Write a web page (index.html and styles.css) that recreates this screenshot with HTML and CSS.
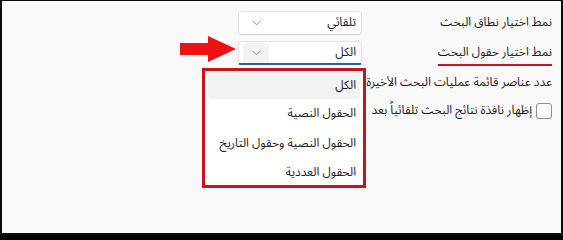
FILE: index.html
```html
<!DOCTYPE html>
<html lang="ar" dir="rtl">
<head>
<meta charset="utf-8">
<title>إعدادات البحث</title>
<link rel="stylesheet" href="styles.css">
</head>
<body>
<div class="frame">
  <div class="settings">
    <div class="row">
      <div class="label">نمط اختيار نطاق البحث</div>
      <div class="combo">
        <span class="combo-text">تلقائي</span>
        <span class="chev"><svg width="9" height="6" viewBox="0 0 9 6"><path d="M0.5 0.8 L4.5 4.8 L8.5 0.8" fill="none" stroke="#8a8a8a" stroke-width="1"/></svg></span>
      </div>
    </div>
    <div class="row">
      <div class="label"><span class="marked">نمط اختيار حقول البحث</span></div>
      <div class="combo combo-open">
        <span class="combo-text">الكل</span>
        <span class="chev chev-hover"><svg width="9" height="6" viewBox="0 0 9 6"><path d="M0.5 0.8 L4.5 4.8 L8.5 0.8" fill="none" stroke="#8a8a8a" stroke-width="1"/></svg></span>
      </div>
    </div>
    <div class="row row-text">
      <div class="label label-wide">عدد عناصر قائمة عمليات البحث الأخيرة</div>
    </div>
    <div class="row row-text">
      <span class="checkbox"></span>
      <div class="label label-wide">إظهار نافذة نتائج البحث تلقائياً بعد</div>
    </div>
  </div>

  <svg class="arrow" width="60" height="28" viewBox="0 0 60 28">
    <polygon points="2,8 30,8 30,1 58,14 30,27 30,20 2,20" fill="#ee1111"/>
  </svg>

  <div class="popup">
    <div class="item item-selected">الكل</div>
    <div class="item">الحقول النصية</div>
    <div class="item">الحقول النصية وحقول التاريخ</div>
    <div class="item">الحقول العددية</div>
  </div>
</div>
</body>
</html>
```

FILE: styles.css
```css
html, body {
  margin: 0;
  padding: 0;
}

body {
  font-family: "Noto Sans Arabic", "DejaVu Sans", sans-serif;
  font-size: 12px;
  color: #1b1b1b;
  background: #000;
}

.frame {
  position: relative;
  width: 563px;
  height: 235px;
  box-sizing: border-box;
  border: 2px solid #0a0a0a;
  border-top-width: 1px;
  background: #f9f9f9;
  overflow: hidden;
}

.settings {
  display: flex;
  flex-direction: column;
  padding-top: 10px;
  padding-right: 9px;
}

.row {
  display: flex;
  align-items: center;
  height: 24px;
  margin-bottom: 6px;
}

.row-text {
  height: 28px;
  margin-bottom: 0;
}

.row:nth-child(3) {
  margin-top: -2px;
}

.label {
  width: 190px;
  white-space: nowrap;
  line-height: 16px;
}

.label-wide {
  width: auto;
}

.marked {
  text-decoration-line: underline;
  text-decoration-color: #c8141e;
  text-decoration-thickness: 2px;
  text-underline-offset: 8px;
  text-decoration-skip-ink: none;
}

.combo {
  width: 124px;
  height: 24px;
  box-sizing: border-box;
  background: #fff;
  border: 1px solid #e3e3e3;
  border-bottom-color: #cfcfcf;
  border-radius: 4px;
  display: flex;
  align-items: center;
  justify-content: space-between;
  padding: 0 5px 0 4px;
}

.combo-open {
  border-bottom: 2px solid #345f8c;
  border-radius: 4px 4px 2px 2px;
}

.combo-text {
  line-height: 16px;
}

.chev {
  width: 26px;
  height: 20px;
  display: flex;
  align-items: center;
  justify-content: center;
  border-radius: 3px;
}

.chev-hover {
  background: #f3f3f3;
}

.checkbox {
  width: 16px;
  height: 16px;
  box-sizing: border-box;
  background: #fff;
  border: 1px solid #8f8f8f;
  border-radius: 3px;
  margin-left: 4px;
}

.arrow {
  position: absolute;
  left: 176px;
  top: 34px;
}

.popup {
  position: absolute;
  left: 200px;
  top: 67px;
  width: 164px;
  height: 120px;
  box-sizing: border-box;
  border: 3px solid #c8141e;
  background: #fff;
  overflow: hidden;
  display: flex;
  flex-direction: column;
}

.item {
  height: 29.6px;
  flex: none;
  display: flex;
  align-items: center;
  padding-right: 4px;
  margin: 0 3px;
  border-radius: 3px;
  white-space: nowrap;
}

.item-selected {
  background: #f2f2f2;
  margin-top: -2px;
  height: 28px;
  padding-top: 2px;
}
```
